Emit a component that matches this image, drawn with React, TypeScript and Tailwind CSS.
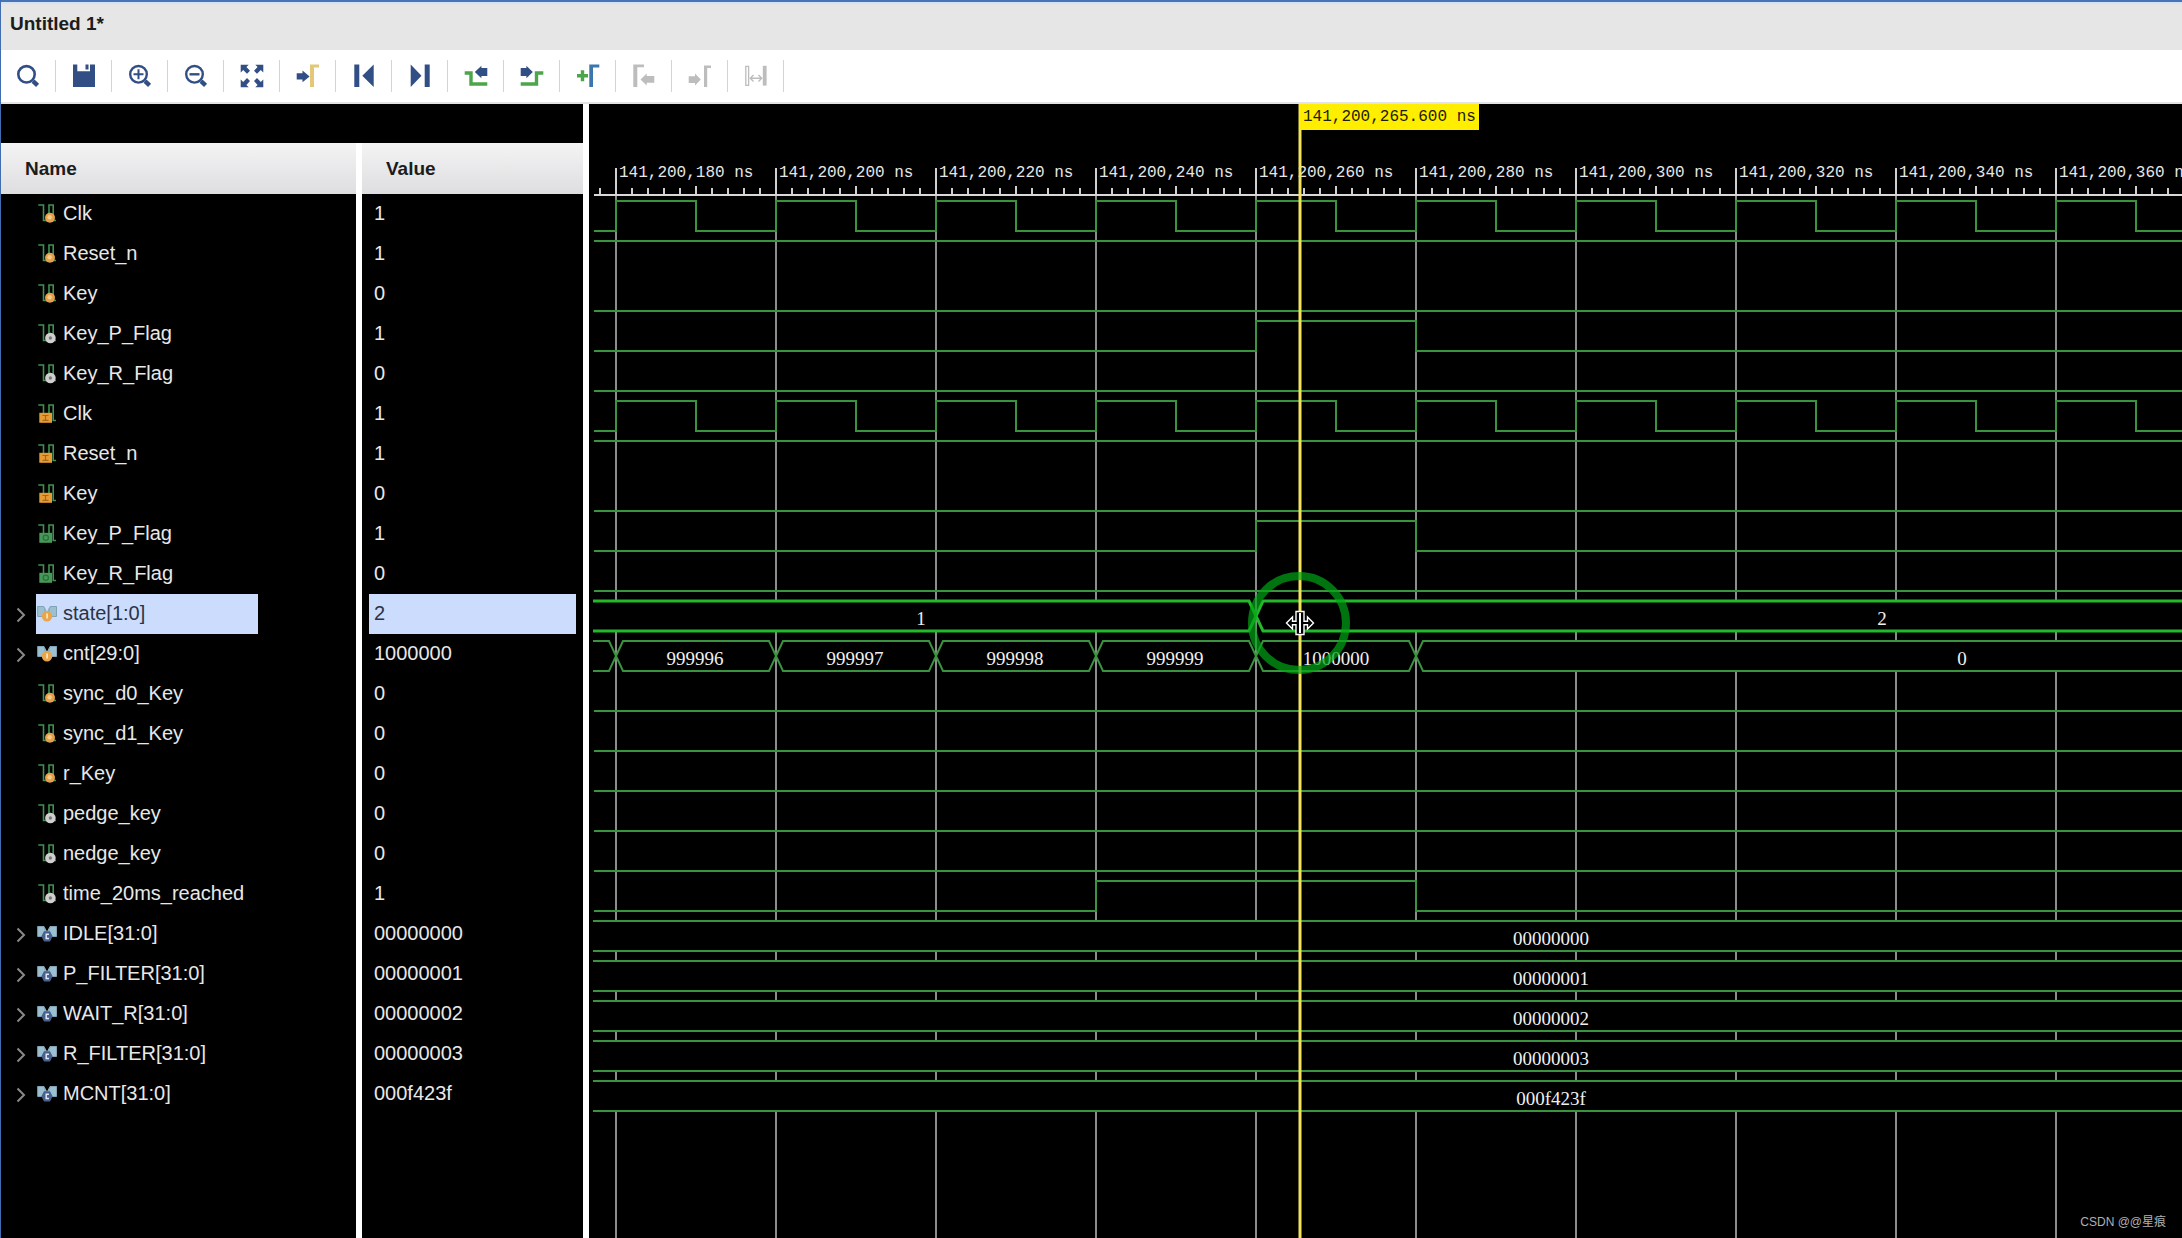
import { useEffect, useRef, useState } from 'react';
import type { ReactNode } from 'react';

type Kind = 'reg' | 'wire' | 'input' | 'output' | 'busReg' | 'busConst';

type Segment = { from: number; to: number; label: string; labelX: number };

type Signal = {
  name: string;
  value: string;
  kind: Kind;
  // wave: 'clock', a constant level, a single pulse or a list of bus segments
  wave: 'clock' | 'high' | 'low' | [number, number] | Segment[];
};

const START = 5;
const END = 4000;
const GRID_X = 27;
const GRID_STEP = 160;
const ROWS_TOP = 90;
const ROW_HEIGHT = 40;
const CURSOR_X = 711;

const constant = (label: string): Segment[] => [{ from: -20, to: END, label, labelX: 962 }];

const SIGNALS: Signal[] = [
  { name: 'Clk', value: '1', kind: 'reg', wave: 'clock' },
  { name: 'Reset_n', value: '1', kind: 'reg', wave: 'high' },
  { name: 'Key', value: '0', kind: 'reg', wave: 'low' },
  { name: 'Key_P_Flag', value: '1', kind: 'wire', wave: [667, 827] },
  { name: 'Key_R_Flag', value: '0', kind: 'wire', wave: 'low' },
  { name: 'Clk', value: '1', kind: 'input', wave: 'clock' },
  { name: 'Reset_n', value: '1', kind: 'input', wave: 'high' },
  { name: 'Key', value: '0', kind: 'input', wave: 'low' },
  { name: 'Key_P_Flag', value: '1', kind: 'output', wave: [667, 827] },
  { name: 'Key_R_Flag', value: '0', kind: 'output', wave: 'low' },
  {
    name: 'state[1:0]',
    value: '2',
    kind: 'busReg',
    wave: [
      { from: -20, to: 667, label: '1', labelX: 332 },
      { from: 667, to: END, label: '2', labelX: 1293 },
    ],
  },
  {
    name: 'cnt[29:0]',
    value: '1000000',
    kind: 'busReg',
    wave: [
      { from: -20, to: 27, label: '', labelX: 0 },
      { from: 27, to: 187, label: '999996', labelX: 106 },
      { from: 187, to: 347, label: '999997', labelX: 266 },
      { from: 347, to: 507, label: '999998', labelX: 426 },
      { from: 507, to: 667, label: '999999', labelX: 586 },
      { from: 667, to: 827, label: '1000000', labelX: 747 },
      { from: 827, to: END, label: '0', labelX: 1373 },
    ],
  },
  { name: 'sync_d0_Key', value: '0', kind: 'reg', wave: 'low' },
  { name: 'sync_d1_Key', value: '0', kind: 'reg', wave: 'low' },
  { name: 'r_Key', value: '0', kind: 'reg', wave: 'low' },
  { name: 'pedge_key', value: '0', kind: 'wire', wave: 'low' },
  { name: 'nedge_key', value: '0', kind: 'wire', wave: 'low' },
  { name: 'time_20ms_reached', value: '1', kind: 'wire', wave: [507, 827] },
  { name: 'IDLE[31:0]', value: '00000000', kind: 'busConst', wave: constant('00000000') },
  { name: 'P_FILTER[31:0]', value: '00000001', kind: 'busConst', wave: constant('00000001') },
  { name: 'WAIT_R[31:0]', value: '00000002', kind: 'busConst', wave: constant('00000002') },
  { name: 'R_FILTER[31:0]', value: '00000003', kind: 'busConst', wave: constant('00000003') },
  { name: 'MCNT[31:0]', value: '000f423f', kind: 'busConst', wave: constant('000f423f') },
];

const NAVY = '#324f85';
const GREEN = '#4ba54b';
const GRAY = '#bdbdbd';

const TOOLS: { label: string; icon: ReactNode }[] = [
  {
    label: 'Search',
    icon: (
      <g fill="none" stroke={NAVY}>
        <circle cx="10.5" cy="10.3" r="8.2" strokeWidth="2.6" />
        <path d="M17 17.2L21.6 21.4" strokeWidth="4.4" />
      </g>
    ),
  },
  {
    label: 'Save',
    icon: <path d="M1 .5H5.3V7.2H18V.5H23V23H1ZM13.5 .5H16.5V5.6H13.5Z" fill={NAVY} />,
  },
  {
    label: 'Zoom in',
    icon: (
      <g fill="none" stroke={NAVY}>
        <circle cx="10.5" cy="10.3" r="8.3" strokeWidth="2.4" />
        <path d="M17 17.2L21.6 21.4" strokeWidth="4.4" />
        <path d="M5.5 10.3H15.5M10.5 5.3V15.3" strokeWidth="2" />
      </g>
    ),
  },
  {
    label: 'Zoom out',
    icon: (
      <g fill="none" stroke={NAVY}>
        <circle cx="10.5" cy="10.3" r="8.3" strokeWidth="2.4" />
        <path d="M17 17.2L21.6 21.4" strokeWidth="4.4" />
        <path d="M5.5 10.3H15.5" strokeWidth="2.4" />
      </g>
    ),
  },
  {
    label: 'Zoom fit',
    icon: (
      <g fill={NAVY}>
        <path d="M.7 .7H8.7L6.4 3L10 6.8L7 9.8L3.2 6L.7 8.5Z" />
        <path d="M23.3 .7H15.3L17.6 3L14 6.8L17 9.8L20.8 6L23.3 8.5Z" />
        <path d="M.7 23.2H8.7L6.4 20.9L10 17.1L7 14.1L3.2 17.9L.7 15.4Z" />
        <path d="M23.3 23.2H15.3L17.6 20.9L14 17.1L17 14.1L20.8 17.9L23.3 15.4Z" />
      </g>
    ),
  },
  {
    label: 'Go to cursor',
    icon: (
      <>
        <path d="M14 .5H23V3.4H18V23H14Z" fill="#e3c878" />
        <path d="M.7 9.2H6.5V6.6L13.6 12.4L6.5 18.2V15.6H.7Z" fill={NAVY} />
      </>
    ),
  },
  {
    label: 'Go to start',
    icon: <path d="M2.3 .5H7.3V23H2.3ZM21.7 .5V23L10.3 11.8Z" fill={NAVY} />,
  },
  {
    label: 'Go to end',
    icon: <path d="M16.7 .5H21.7V23H16.7ZM2.7 .5V23L13.5 11.8Z" fill={NAVY} />,
  },
  {
    label: 'Previous transition',
    icon: (
      <>
        <path d="M.7 9H7V20H23.3" fill="none" stroke={GREEN} strokeWidth="3.4" />
        <path d="M10.8 8L17.4 1.7V4H23.3V12H17.4V14.3Z" fill={NAVY} />
      </>
    ),
  },
  {
    label: 'Next transition',
    icon: (
      <>
        <path d="M.7 20H16.5V9H23.3" fill="none" stroke={GREEN} strokeWidth="3.4" />
        <path d="M12.8 8L6.4 1.7V4H.7V12H6.4V14.3Z" fill={NAVY} />
      </>
    ),
  },
  {
    label: 'Add marker',
    icon: (
      <>
        <path d="M1 11.7H12M6.5 6.2V17.2" stroke={GREEN} strokeWidth="3.4" />
        <path d="M13.3 .5H23.3V3.6H17V23H13.3Z" fill="#3b76ad" />
      </>
    ),
  },
  {
    label: 'Previous marker',
    icon: <path d="M1.3 .5H12V3.2H5.3V23H1.3ZM8.5 15.4L14.7 9.4V12H22.3V18.8H14.7V21.4Z" fill={GRAY} />,
  },
  {
    label: 'Next marker',
    icon: <path d="M16 1.5H23V4H19.2V23H16ZM12.8 15.6L7 9.6V12.2H.7V19H7V21.6Z" fill={GRAY} />,
  },
  {
    label: 'Swap cursors',
    icon: (
      <>
        <path d="M1.8 2.3H4.6V21.3H1.8Z" fill="none" stroke={GRAY} strokeWidth="1.3" />
        <path d="M18.8 1.8H22.6V21.6H18.8Z" fill={GRAY} />
        <path d="M6.5 14.2H17.5M9.5 11L6.3 14.2L9.5 17.4M14.5 11L17.7 14.2L14.5 17.4" fill="none" stroke={GRAY} strokeWidth="1.4" />
      </>
    ),
  },
];

function SignalIcon({ kind }: { kind: Kind }) {
  if (kind === 'busReg' || kind === 'busConst') {
    return (
      <svg width="18" height="20" viewBox="0 0 18 20" className="shrink-0 overflow-visible">
        <path d="M-.3 2H6L9 7.5L12 2H18.5V12.5H-.3Z" fill="#9cc0cf" />
        <path d="M-.3 2.5H5.5L7 5V12.5H-.3ZM18.5 2.5H12.5L11 5V12.5H18.5Z" fill="none" stroke="#7fa3b5" />
        {kind === 'busReg' ? (
          <>
            <circle cx="9" cy="12.2" r="5.2" fill="#e9a54c" />
            <path d="M8.2 9.6H10V14.6H8.2Z" fill="#fbe3b4" />
          </>
        ) : (
          <>
            <path d="M6 7.2H12L14.6 12.2L12 17.5H6L3.4 12.2Z" fill="#46618f" />
            <path d="M10.9 10.3H8.2V14.5H10.9" fill="none" stroke="#e6ecf5" strokeWidth="1.4" />
          </>
        )}
      </svg>
    );
  }
  return (
    <svg width="18" height="20" viewBox="0 0 18 20" className="shrink-0">
      <path d="M.3 1H5.5V16.5H11V1H15.2V16.5H18" fill="none" stroke="#3f9150" strokeWidth="1.6" />
      {kind === 'reg' && (
        <>
          <circle cx="12" cy="13.8" r="5" fill="#e6a04a" />
          <circle cx="11.6" cy="13.3" r="2.2" fill="#f7c987" />
        </>
      )}
      {kind === 'wire' && (
        <>
          <circle cx="12.4" cy="14" r="5.3" fill="#cfcfcf" />
          <circle cx="12.4" cy="14" r="1.7" fill="#7b7b7b" />
        </>
      )}
      {kind === 'input' && (
        <>
          <path d="M1.3 8.8H14V18.8H1.3Z" fill="#e79c33" />
          <path d="M4.5 11.5H10.5M4.5 16.3H10.5M7.5 11.5V16.3" stroke="#a4681c" strokeWidth="1.2" />
        </>
      )}
      {kind === 'output' && (
        <>
          <path d="M1.3 8.8H14V18.8H1.3Z" fill="#47995a" />
          <circle cx="7.8" cy="13.8" r="2.6" fill="none" stroke="#2c7038" strokeWidth="1.3" />
        </>
      )}
    </svg>
  );
}

function Toolbar() {
  return (
    <div className="flex h-[54px] items-center border-b-2 border-[#e4e4e4] bg-white">
      {TOOLS.map((tool) => (
        <button
          key={tool.label}
          type="button"
          aria-label={tool.label}
          className="flex h-8 w-14 items-center justify-center border-r border-[#d4d4d4]"
        >
          <svg width="24" height="24" viewBox="0 0 24 24">
            {tool.icon}
          </svg>
        </button>
      ))}
    </div>
  );
}

function SignalTable({ selected, onSelect }: { selected: number; onSelect: (row: number) => void }) {
  return (
    <table className="h-full w-[588px] table-fixed border-separate border-spacing-0 text-left text-[20px] leading-6 text-[#e8e8e8]">
      <thead>
        <tr className="h-[51px] text-[19px] text-[#1c1c1c]">
          <th className="w-[361px] border-r-[6px] border-white bg-linear-to-b from-[#f4f4f5] to-[#dedee0] px-6 py-0 font-bold">Name</th>
          <th className="border-r-[6px] border-white bg-linear-to-b from-[#f4f4f5] to-[#dedee0] px-6 py-0 font-bold">Value</th>
        </tr>
      </thead>
      <tbody>
        {SIGNALS.map((signal, row) => {
          const active = row === selected;
          const expandable = signal.kind === 'busReg' || signal.kind === 'busConst';
          return (
            <tr key={row} className="h-10" onClick={() => onSelect(row)}>
              <td className="border-r-[6px] border-white p-0">
                <div className="flex h-10 items-center">
                  <div className="flex w-[35px] shrink-0 justify-center pl-1">
                    {expandable && (
                      <button type="button" aria-label={`Expand ${signal.name}`} className="pt-0.5">
                        <svg width="10" height="16" viewBox="0 0 10 16" fill="none" stroke="#8a8a8a" strokeWidth="2">
                          <path d="M1.5 1.5L8 8L1.5 14.5" />
                        </svg>
                      </button>
                    )}
                  </div>
                  <div className={`flex h-10 w-[222px] items-center gap-[7px] pl-0.5 ${active ? 'bg-[#cbdcfd] text-[#2a3346]' : ''}`}>
                    <SignalIcon kind={signal.kind} />
                    <span className="pb-[3px]">{signal.name}</span>
                  </div>
                </div>
              </td>
              <td className="border-r-[6px] border-white p-0">
                <div className={`mx-[7px] flex h-10 items-center pb-[3px] pl-[5px] ${active ? 'bg-[#cbdcfd] text-[#2a3346]' : ''}`}>
                  {signal.value}
                </div>
              </td>
            </tr>
          );
        })}
        <tr>
          <td className="border-r-[6px] border-white p-0" />
          <td className="border-r-[6px] border-white p-0" />
        </tr>
      </tbody>
    </table>
  );
}

function clockPath(high: number, low: number) {
  let d = `M${START} ${low}`;
  for (let x = GRID_X; x < END; x += GRID_STEP) {
    d += `H${x}V${high}H${x + GRID_STEP / 2}V${low}`;
  }
  return d;
}

function Wave({ signal, row, selected }: { signal: Signal; row: number; selected: boolean }) {
  const top = ROWS_TOP + row * ROW_HEIGHT;
  const high = top + 7;
  const low = top + 37;
  const mid = top + 22;
  const { wave } = signal;

  if (typeof wave !== 'string' && typeof wave[0] === 'object') {
    return (
      <g>
        {(wave as Segment[]).map((s) => (
          <g key={s.from}>
            <path
              d={`M${s.from} ${mid}L${s.from + 7} ${high}H${s.to - 7}L${s.to} ${mid}L${s.to - 7} ${low}H${s.from + 7}Z`}
              fill="#000"
              stroke={selected ? '#23b92b' : '#3a943f'}
              strokeWidth={selected ? 3 : 2}
            />
            <text x={s.labelX} y={top + 31} textAnchor="middle" className="fill-[#f0f0f0] font-['Liberation_Serif',serif] text-[19px]">
              {s.label}
            </text>
          </g>
        ))}
      </g>
    );
  }

  let d = '';
  if (wave === 'clock') d = clockPath(high, low);
  else if (wave === 'high') d = `M${START} ${high}H${END}`;
  else if (wave === 'low') d = `M${START} ${low}H${END}`;
  else d = `M${START} ${low}H${wave[0]}V${high}H${wave[1]}V${low}H${END}`;
  return <path d={d} fill="none" stroke="#3a943f" strokeWidth="2" />;
}

function WaveView({ selected }: { selected: number }) {
  const panel = useRef<HTMLDivElement>(null);
  const [width, setWidth] = useState(1500);

  // only draw the part of the ruler that is in view
  useEffect(() => {
    if (!panel.current) return;
    const observer = new ResizeObserver(([entry]) => setWidth(entry.contentRect.width));
    observer.observe(panel.current);
    return () => observer.disconnect();
  }, []);

  const count = Math.max(0, Math.ceil((width - GRID_X) / GRID_STEP));
  const majors = Array.from({ length: count }, (_, i) => GRID_X + i * GRID_STEP);
  const minors = Array.from({ length: count * 10 }, (_, i) => i - 1).filter((i) => i % 10 !== 0);

  return (
    <div ref={panel} className="relative min-w-0 flex-1 overflow-hidden">
      <svg className="absolute inset-0 h-full w-full" role="img" aria-label="Waveform">
        <defs>
          <clipPath id="wave-area">
            <rect x={START - 1} y="0" width={END} height="100%" />
          </clipPath>
        </defs>

        {/* Ruler */}
        {majors.map((x) => (
          <line key={x} x1={x} x2={x} y1="64" y2="100%" stroke="#8c8c8c" strokeWidth="2" />
        ))}
        {majors.map((x) => (
          <line key={x} x1={x} x2={x} y1="64" y2="92" stroke="#d0d0d0" strokeWidth="2" />
        ))}
        {minors.map((i) => {
          const x = GRID_X + i * 16;
          return <line key={i} x1={x} x2={x} y1={i % 5 === 0 ? 82 : 84} y2="91" stroke="#d0d0d0" strokeWidth="2" />;
        })}
        <line x1={START} x2={END} y1="91" y2="91" stroke="#d8d8d8" strokeWidth="2" />
        {majors.map((x, i) => (
          <text key={x} x={x + 3} y="73" className="fill-[#e6e6e6] font-['Liberation_Mono',monospace] text-[16px]">
            {`141,200,${180 + i * 20} ns`}
          </text>
        ))}

        {/* Traces */}
        <g clipPath="url(#wave-area)">
          {SIGNALS.map((signal, row) => (
            <Wave key={row} signal={signal} row={row} selected={row === selected} />
          ))}
        </g>

        {/* Time cursor */}
        <line x1={CURSOR_X} x2={CURSOR_X} y1="0" y2="100%" stroke="#f3e25c" strokeWidth="3" />
        <rect x={CURSOR_X - 1} y="0" width="180" height="26" fill="#ffee00" />
        <text x={CURSOR_X + 3} y="17" className="fill-[#1e1c00] font-['Liberation_Mono',monospace] text-[16px]">
          141,200,265.600 ns
        </text>

        {/* Click highlight and resize pointer */}
        <circle cx="710" cy="519" r="47" fill="none" stroke="#00a514" strokeOpacity="0.7" strokeWidth="8" />
        <g fill="#000" stroke="#fff" strokeWidth="1.4">
          <path d="M697.5 519L703.5 513V517.2H707V507.5H715V517.2H718.5V513L724.5 519L718.5 525V520.8H715V530.5H707V520.8H703.5V525Z" />
          <path d="M711 509V529" strokeWidth="2" />
        </g>
      </svg>
    </div>
  );
}

export default function App() {
  const [selected, setSelected] = useState(10);

  return (
    <div className="relative flex min-h-screen flex-col overflow-hidden bg-black font-['Liberation_Sans',Arial,sans-serif]">
      <header className="flex h-[50px] items-center border-t-2 border-[#4a72b4] bg-[#e6e6e6] px-2.5 pb-1 shadow-[inset_0_2px_0_#d3e3f7]">
        <h1 className="text-[19px] leading-6 font-bold text-[#1c1c1c]">Untitled 1*</h1>
      </header>
      <Toolbar />
      <main className="flex flex-1 pl-px">
        <div className="flex shrink-0 flex-col">
          <div className="h-[39px] border-r-[6px] border-white" />
          <div className="flex-1">
            <SignalTable selected={selected} onSelect={setSelected} />
          </div>
        </div>
        <WaveView selected={selected} />
      </main>
      {/* Window frame */}
      <div className="pointer-events-none absolute inset-y-0 left-0 w-px bg-[#3f6db0]" />
      <div className="absolute right-4 bottom-2 text-[12px] leading-4 text-[#b0b0b0] font-['Liberation_Sans','Noto_Sans_CJK_SC',sans-serif]">
        CSDN @@星痕
      </div>
    </div>
  );
}
